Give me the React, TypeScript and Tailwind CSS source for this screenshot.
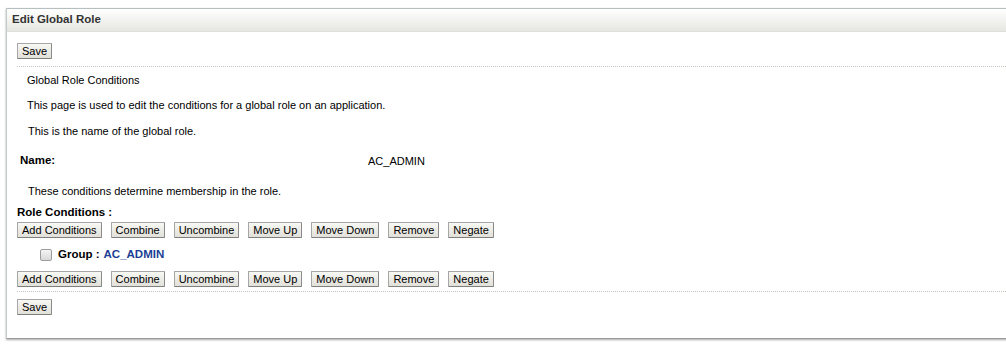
import type { ReactNode } from 'react'

const font = { fontFamily: '"Liberation Sans", Arial, sans-serif' }

function Btn({ children }: { children: ReactNode }) {
  return (
    <button className="flex h-[16px] items-center rounded-[1px] border border-[#a6a6a6] border-b-[#7f7f7f] border-r-[#8a8a8a] bg-gradient-to-b from-[#f8f8f4] to-[#e1e0d9] px-[4px] text-[11px] leading-none text-black">
      {children}
    </button>
  )
}

function ConditionButtons() {
  const labels = ['Add Conditions', 'Combine', 'Uncombine', 'Move Up', 'Move Down', 'Remove', 'Negate']
  return (
    <div className="flex h-[16px] items-center gap-[9px]">
      {labels.map((l) => (
        <Btn key={l}>{l}</Btn>
      ))}
    </div>
  )
}

function Dotted() {
  return <div className="h-0 border-t border-dotted border-[#c4c4bc]" />
}

export default function App() {
  return (
    <div className="h-[344px] w-[1006px] overflow-hidden bg-white pl-[6px] pt-[8px] text-[11px] text-black" style={font}>
      <div className="h-[331px] w-[1010px] border-b border-l border-t border-[#c6cbcb] border-b-[#9c9c9c] border-t-[#b6bfbf] shadow-[0_1px_2px_rgba(0,0,0,0.35)]">
        <div className="flex h-[23px] items-center border-b border-[#dedfda] bg-gradient-to-b from-white to-[#e6e6e1] px-[5px]">
          <span className="text-[11.5px] font-bold text-[#333]">Edit Global Role</span>
        </div>

        <div className="pl-[10px]">
          <div className="mt-[11px] flex">
            <Btn>Save</Btn>
          </div>
          <div className="mt-[7px]">
            <Dotted />
          </div>

          <div className="flex h-[26px] items-center pl-[10px]">Global Role Conditions</div>
          <div className="flex h-[25px] items-center pl-[10px]">
            This page is used to edit the conditions for a global role on an application.
          </div>
          <div className="flex h-[26px] items-center pl-[11px]">This is the name of the global role.</div>
          <div className="flex h-[34px] items-center pl-[3px]">
            <span className="w-[348px] text-[11.5px] font-bold">Name:</span>
            <span>AC_ADMIN</span>
          </div>
          <div className="flex h-[26px] items-center pl-[11px]">
            These conditions determine membership in the role.
          </div>
          <div className="flex h-[18px] items-center text-[11.5px] font-bold">Role Conditions :</div>

          <ConditionButtons />

          <div className="flex h-[33px] items-center pl-[23px] text-[11.5px] font-bold">
            <span className="mr-[6px] h-[12px] w-[12px] rounded-[2px] border border-[#9d9d9d] bg-gradient-to-b from-[#f4f4f4] to-[#d9d9d9]" />
            <span>Group :</span>
            <span className="ml-[4px] text-[#1c3f94]">AC_ADMIN</span>
          </div>

          <ConditionButtons />

          <div className="mt-[4px]">
            <Dotted />
          </div>
          <div className="mt-[7px] flex">
            <Btn>Save</Btn>
          </div>
        </div>
      </div>
    </div>
  )
}
